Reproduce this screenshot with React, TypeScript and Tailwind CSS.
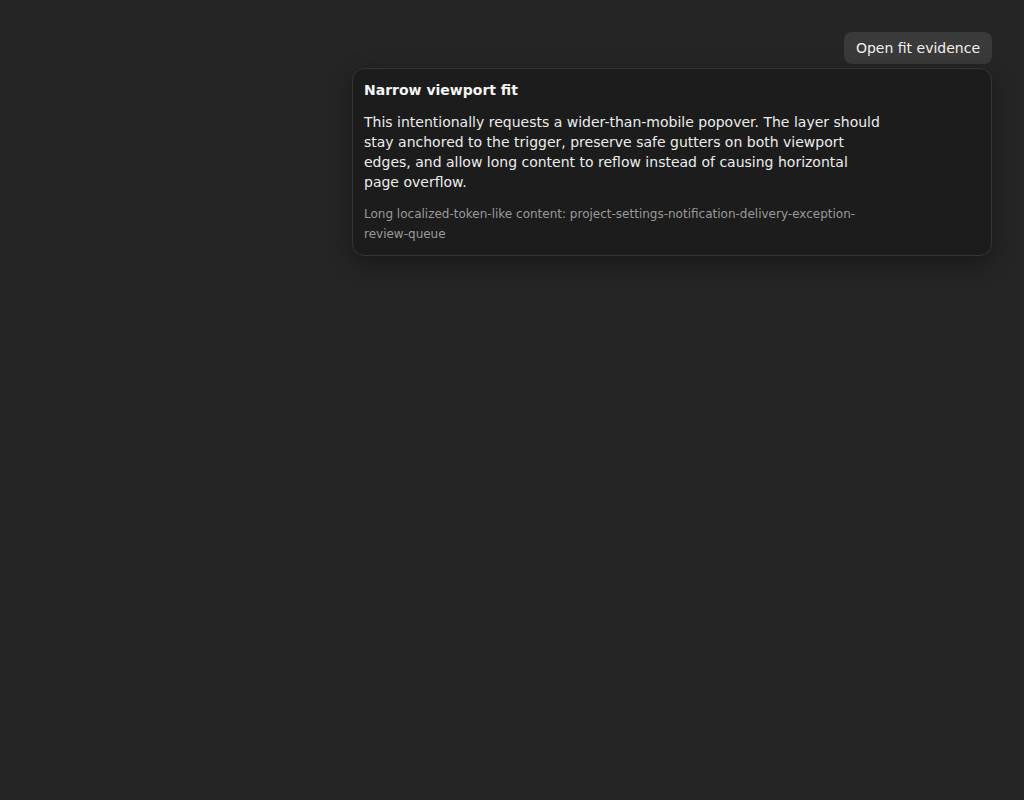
export default function App() {
  return (
    <div className="min-h-[800px] bg-[#252525] px-8 pt-8 font-['DejaVu_Sans',sans-serif]">
      <div className="flex flex-col items-end gap-1">
        <button className="h-8 rounded-lg bg-[#3a3a3a] px-3 text-[14px] leading-5 text-[#f0f0f0]">
          Open fit evidence
        </button>
        <div className="w-[640px] rounded-xl border border-[#353535] bg-[#1c1c1c] p-[11px] shadow-[0_8px_24px_rgba(0,0,0,0.35)]">
          <div className="text-[14px] font-bold leading-5 text-[#f5f5f5]">Narrow viewport fit</div>
          <p className="mt-3 max-w-[520px] text-[14px] leading-5 text-[#ececec]">
            This intentionally requests a wider-than-mobile popover. The layer should stay anchored to the
            trigger, preserve safe gutters on both viewport edges, and allow long content to reflow instead of
            causing horizontal page overflow.
          </p>
          <p className="mt-3 max-w-[520px] break-words text-[12px] leading-5 text-[#9a9a9a]">
            Long localized-token-like content: project-settings-notification-delivery-exception-review-queue
          </p>
        </div>
      </div>
    </div>
  )
}
